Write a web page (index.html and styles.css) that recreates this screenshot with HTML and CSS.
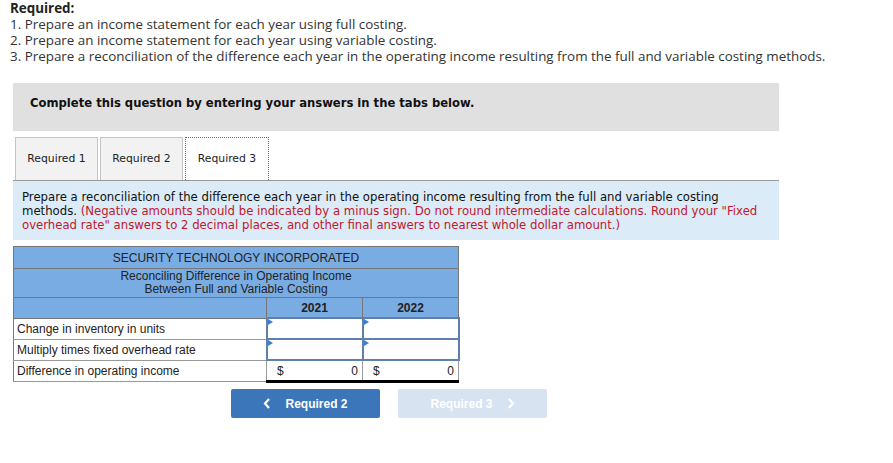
FILE: index.html
```html
<!DOCTYPE html>
<html>
<head>
<meta charset="utf-8">
<link rel="stylesheet" href="styles.css">
</head>
<body>
<div class="req">
  <div class="req-title">Required:</div>
  <div>1. Prepare an income statement for each year using full costing.</div>
  <div>2. Prepare an income statement for each year using variable costing.</div>
  <div>3. Prepare a reconciliation of the difference each year in the operating income resulting from the full and variable costing methods.</div>
</div>
<div class="complete">Complete this question by entering your answers in the tabs below.</div>
<div class="tabs">
  <div class="tab">Required 1</div>
  <div class="tab">Required 2</div>
  <div class="tab active">Required 3</div>
</div>
<div class="info">Prepare a reconciliation of the difference each year in the operating income resulting from the full and variable costing methods. <span class="note">(Negative amounts should be indicated by a minus sign. Do not round intermediate calculations. Round your "Fixed overhead rate" answers to 2 decimal places, and other final answers to nearest whole dollar amount.)</span></div>
<table class="recon">
  <tr class="h1"><th colspan="3">SECURITY TECHNOLOGY INCORPORATED</th></tr>
  <tr class="h2"><th colspan="3">Reconciling Difference in Operating Income<br>Between Full and Variable Costing</th></tr>
  <tr class="h3"><th class="lbl"></th><th class="yr">2021</th><th class="yr">2022</th></tr>
  <tr class="row"><td class="lbl">Change in inventory in units</td><td class="inp"><span class="tri"></span></td><td class="inp"><span class="tri"></span></td></tr>
  <tr class="row"><td class="lbl">Multiply times fixed overhead rate</td><td class="inp"><span class="tri"></span></td><td class="inp"><span class="tri"></span></td></tr>
  <tr class="row last"><td class="lbl">Difference in operating income</td><td class="tot"><span class="dol">$</span><span>0</span></td><td class="tot"><span class="dol">$</span><span>0</span></td></tr>
</table>
<div class="nav">
  <div class="btn prev"><svg class="chev" width="8" height="11" viewBox="0 0 8 11"><polyline points="6,1 2,5.5 6,10" fill="none" stroke="#fff" stroke-width="2.2"/></svg>Required 2</div>
  <div class="btn next">Required 3<svg class="chev" width="8" height="11" viewBox="0 0 8 11"><polyline points="2,1 6,5.5 2,10" fill="none" stroke="#fff" stroke-width="2.2"/></svg></div>
</div>
</body>
</html>
```
FILE: styles.css
```css
body {
  margin: 0;
  background: #fff;
}
.req {
  padding: 0 0 0 10px;
  font-family: "Open Sans", Lato, sans-serif;
  font-size: 13.4px;
  line-height: 16px;
  color: #333;
}
.req-title {
  font-weight: bold;
  color: #222;
}
.complete {
  margin: 19px 0 0 13px;
  width: 766px;
  height: 48px;
  box-sizing: border-box;
  background: #e0e0e0;
  font-family: "DejaVu Sans", Verdana, sans-serif;
  font-weight: bold;
  font-size: 11.6px;
  line-height: 40px;
  padding-left: 17px;
  color: #111;
}
.tabs {
  display: flex;
  gap: 2px;
  margin: 6px 0 0 15px;
  height: 43px;
}
.tab {
  width: 83px;
  box-sizing: border-box;
  border: 1px solid #c4c4c4;
  border-bottom: none;
  background: #f2f2f2;
  font-family: "DejaVu Sans", Verdana, sans-serif;
  font-size: 10.8px;
  line-height: 42px;
  text-align: center;
  color: #222;
}
.tab.active {
  width: 84px;
  background: #fff;
  border: 1px dotted #4a6fa5;
  border-bottom: none;
}
.info {
  margin: 0 0 0 13px;
  width: 766px;
  height: 60px;
  box-sizing: border-box;
  background: #dcebf8;
  border-top: 1px solid #999;
  padding: 9px 12px 0 9px;
  font-family: "DejaVu Sans", Verdana, sans-serif;
  font-size: 11.7px;
  line-height: 14px;
  color: #111;
}
.note {
  color: #c0182c;
}
.recon {
  margin: 6px 0 0 13px;
  border-collapse: collapse;
  font-family: "Liberation Sans", Arial, sans-serif;
  font-size: 12px;
  color: #222;
}
.recon th {
  background: #79ace3;
  border: 1px solid #777;
  font-weight: normal;
  padding: 0;
}
.h1 th {
  height: 21px;
}
.h2 th {
  height: 28px;
  line-height: 13px;
}
.h3 th {
  height: 19px;
  font-weight: bold;
}
.h3 th.yr {
  width: 95px;
}
.h3 th.lbl {
  width: 252px;
}
.row td {
  height: 19px;
  border: 1px solid #999;
  padding: 0;
}
.row td.lbl {
  padding-left: 3px;
  border-left: 1px solid #777;
}
.row td.inp {
  border: 2px solid #5f80ad;
  position: relative;
  background: #fff;
}
.tri {
  position: absolute;
  left: 0;
  top: 0;
  width: 0;
  height: 0;
  border-top: 3px solid transparent;
  border-bottom: 3px solid transparent;
  border-left: 5px solid #3b7dd8;
}
.row.last td.tot {
  border-top: 1px solid #000;
  border-bottom: 3px solid #000;
  padding: 0 4px 0 10px;
}
.tot span:last-child {
  float: right;
}
.dol {
  float: left;
}
.nav {
  display: flex;
  gap: 18px;
  margin: 6px 0 0 231px;
}
.btn {
  width: 149px;
  height: 29px;
  border-radius: 2px;
  display: flex;
  align-items: center;
  justify-content: center;
  gap: 14px;
  font-family: "Liberation Sans", Arial, sans-serif;
  font-weight: bold;
  font-size: 12px;
  color: #fff;
}
.btn.prev {
  background: #3a76b9;
}
.btn.next {
  background: #d7e3f1;
}
.chev {
  display: block;
}
```
